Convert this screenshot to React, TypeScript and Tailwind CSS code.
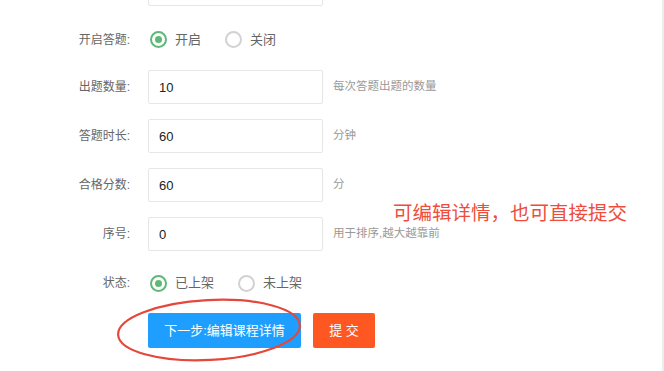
const font = "font-['Liberation_Sans','Noto_Sans_CJK_SC',sans-serif]";

const Label = ({ text }: { text: string }) => (
  <div className="w-[148px] shrink-0 pr-[18px] text-right text-[12px] text-[#666]">{text}</div>
);

const Radio = ({ checked, text }: { checked: boolean; text: string }) => (
  <div className="flex items-center mr-[22px]">
    <span
      className={
        checked
          ? "w-[17px] h-[17px] rounded-full border-2 border-[#5fb878] flex items-center justify-center ml-[2px]"
          : "w-[17px] h-[17px] rounded-full border-2 border-[#d2d2d2] ml-[2px]"
      }
    >
      {checked && <span className="w-[7px] h-[7px] rounded-full bg-[#5fb878]" />}
    </span>
    <span className="ml-[8px] text-[13px] text-[#666]">{text}</span>
  </div>
);

const Field = ({ label, value, hint }: { label: string; value: string; hint?: string }) => (
  <div className="flex items-center h-[34px] mb-[15px]">
    <Label text={label} />
    <input
      readOnly
      value={value}
      className="w-[175px] h-[34px] border border-[#e6e6e6] rounded-[2px] px-[10px] text-[13px] text-[#222] outline-none bg-white"
    />
    {hint && <span className="ml-[10px] text-[11.5px] text-[#999]">{hint}</span>}
  </div>
);

export default function App() {
  return (
    <div className={`relative w-[664px] h-[371px] overflow-hidden bg-white flex ${font}`}>
      <div className="flex-1 -mt-[28px]">
        {/* partially scrolled-off field */}
        <div className="flex items-center h-[34px] mb-[15px]">
          <Label text="" />
          <div className="w-[175px] h-[34px] border border-[#e6e6e6] rounded-[2px]" />
        </div>

        <div className="flex items-center h-[34px] mb-[15px] pt-[3px]">
          <Label text="开启答题:" />
          <Radio checked text="开启" />
          <Radio checked={false} text="关闭" />
        </div>

        <Field label="出题数量:" value="10" hint="每次答题出题的数量" />
        <Field label="答题时长:" value="60" hint="分钟" />
        <Field label="合格分数:" value="60" hint="分" />
        <Field label="序号:" value="0" hint="用于排序,越大越靠前" />

        <div className="flex items-center h-[34px] mb-[13px]">
          <Label text="状态:" />
          <Radio checked text="已上架" />
          <Radio checked={false} text="未上架" />
        </div>

        <div className="flex pl-[148px] gap-[12px]">
          <button className="w-[153px] h-[35px] rounded-[2px] bg-[#1e9fff] text-white text-[13px]">
            下一步:编辑课程详情
          </button>
          <button className="w-[62px] h-[35px] rounded-[2px] bg-[#ff5722] text-white text-[13px]">
            提 交
          </button>
        </div>
      </div>
      <div className="w-[2px] bg-[#ededed]" />

      {/* annotation */}
      <div className="absolute left-[393px] top-[200px] text-[19.5px] leading-[26px] text-[#ee4d3d]">
        可编辑详情，也可直接提交
      </div>
      <svg className="absolute left-0 top-0 pointer-events-none" width="664" height="371">
        <ellipse
          cx="209"
          cy="330"
          rx="91"
          ry="30"
          fill="none"
          stroke="#e5473b"
          strokeWidth="2.2"
          transform="rotate(-3 209 330)"
        />
      </svg>
    </div>
  );
}
